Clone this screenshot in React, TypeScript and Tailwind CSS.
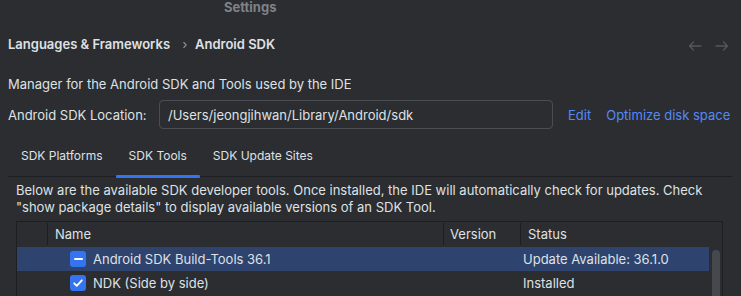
import React from "react";

const FONT = { fontFamily: "Inter, 'Noto Sans', 'Liberation Sans', sans-serif" };

function ArrowLeft() {
  return (
    <svg width="14" height="14" viewBox="0 0 14 14" fill="none">
      <path d="M13 7H1.5M5.5 3L1.5 7L5.5 11" stroke="#54575d" strokeWidth="1.3" strokeLinecap="round" strokeLinejoin="round" />
    </svg>
  );
}
function ArrowRight() {
  return (
    <svg width="14" height="14" viewBox="0 0 14 14" fill="none">
      <path d="M1 7H12.5M8.5 3L12.5 7L8.5 11" stroke="#54575d" strokeWidth="1.3" strokeLinecap="round" strokeLinejoin="round" />
    </svg>
  );
}

function Checkbox({ kind }: { kind: "check" | "indeterminate" }) {
  return (
    <div className="w-[16px] h-[16px] rounded-[3px] bg-[#3574f0] flex items-center justify-center shrink-0">
      {kind === "check" ? (
        <svg width="12" height="12" viewBox="0 0 12 12" fill="none">
          <path d="M2.2 6.3L4.8 8.8L9.8 3.3" stroke="#ffffff" strokeWidth="1.8" strokeLinecap="round" strokeLinejoin="round" />
        </svg>
      ) : (
        <div className="w-[9px] h-[2px] bg-white rounded-[1px]" />
      )}
    </div>
  );
}

export default function App() {
  return (
    <div className="w-[741px] h-[296px] overflow-hidden bg-[#2b2d30] text-[#dfe1e5] text-[13px] leading-[16px]" style={FONT}>
      {/* Title */}
      <div className="h-[14px] flex items-center pl-[224px] overflow-visible">
        <span className="font-bold text-[#7f8389] leading-[16px]">Settings</span>
      </div>

      {/* Breadcrumb */}
      <div className="mt-[22px] flex items-start justify-between pl-[8px] pr-[12px]">
        <div className="flex items-center font-semibold">
          <span>Languages &amp; Frameworks</span>
          <svg width="6" height="8" viewBox="0 0 6 8" fill="none" className="ml-[12px] mr-[7px] mt-[1px]">
            <path d="M1.8 1.5L4.2 4L1.8 6.5" stroke="#8c8f94" strokeWidth="1.1" strokeLinecap="round" strokeLinejoin="round" />
          </svg>
          <span>Android SDK</span>
        </div>
        <div className="flex items-center gap-[13px] mt-[3px]">
          <ArrowLeft />
          <ArrowRight />
        </div>
      </div>

      {/* Description */}
      <div className="mt-[23px] pl-[8px]">Manager for the Android SDK and Tools used by the IDE</div>

      {/* Location */}
      <div className="mt-[8px] flex items-center h-[29px] pl-[8px]">
        <span className="w-[151px]">Android SDK Location:</span>
        <div className="w-[394px] h-[29px] border border-[#4a4d53] rounded-[4px] flex items-center pl-[8px]">
          /Users/jeongjihwan/Library/Android/sdk
        </div>
        <span className="ml-[15px] text-[#548af7]">Edit</span>
        <span className="ml-[15px] text-[#548af7]">Optimize disk space</span>
      </div>

      {/* Tabs */}
      <div className="mt-[9px] ml-[8px] w-[724px] h-[39px] border-b border-[#1e1f22] flex text-[12px]">
        <div className="relative px-[13px] pb-[2px] flex items-center h-[38px]">SDK Platforms</div>
        <div className="relative px-[13px] pb-[2px] flex items-center h-[38px]">
          SDK Tools
          <div className="absolute left-0 right-0 bottom-[-2px] h-[3px] bg-[#3574f0] rounded-[1px]" />
        </div>
        <div className="relative px-[13px] pb-[2px] flex items-center h-[38px]">SDK Update Sites</div>
      </div>

      {/* Info text */}
      <div className="mt-[5px] pl-[16px] leading-[17px]">
        <div>Below are the available SDK developer tools. Once installed, the IDE will automatically check for updates. Check</div>
        <div>"show package details" to display available versions of an SDK Tool.</div>
      </div>

      {/* Table */}
      <div className="mt-[5px] ml-[16px] w-[707px] border border-[#1e1f22] border-b-0">
        <div className="h-[25px] flex items-start pt-[1px]">
          <div className="w-[30px] h-[22px]" />
          <div className="w-[396px] h-[22px] border-l border-[#1e1f22] pl-[7px] flex items-center">Name</div>
          <div className="w-[77px] h-[22px] border-l border-[#1e1f22] pl-[6px] flex items-center">Version</div>
          <div className="flex-1 h-[22px] border-l border-[#1e1f22] pl-[7px] flex items-center">Status</div>
        </div>
        <div className="flex">
          <div className="w-[692px]">
            <div className="h-[24px] flex items-center bg-[#2e436e]">
              <div className="w-[53px]" />
              <div className="w-[373px] flex items-center gap-[7px]">
                <Checkbox kind="indeterminate" />
                <span>Android SDK Build-Tools 36.1</span>
              </div>
              <div className="w-[77px]" />
              <div className="pl-[3px]">Update Available: 36.1.0</div>
            </div>
            <div className="h-[24px] flex items-center">
              <div className="w-[53px]" />
              <div className="w-[373px] flex items-center gap-[7px]">
                <Checkbox kind="check" />
                <span>NDK (Side by side)</span>
              </div>
              <div className="w-[77px]" />
              <div className="pl-[3px]">Installed</div>
            </div>
          </div>
          <div className="flex-1 pl-[3px] pt-[3px]">
            <div className="w-[8px] h-[80px] rounded-full bg-[#46484d]" />
          </div>
        </div>
      </div>
    </div>
  );
}
